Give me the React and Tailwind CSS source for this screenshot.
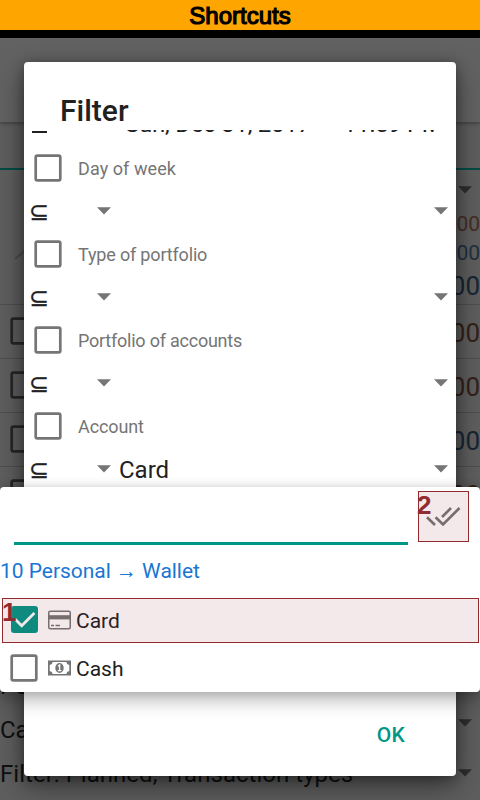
import React from "react";

function Arrow({ className = "" }) {
  return (
    <svg width="14" height="8" viewBox="0 0 14 8" className={`block shrink-0 ${className}`}>
      <path d="M0 0.2H14L7 7.6Z" fill="currentColor" />
    </svg>
  );
}

function Box({ className = "" }) {
  return (
    <svg width="28" height="28" viewBox="0 0 28 28" className={`block shrink-0 ${className}`} fill="none">
      <rect x="1.7" y="1.7" width="24.6" height="24.6" rx="1.6" stroke="currentColor" strokeWidth="2.7" />
    </svg>
  );
}

function Backdrop() {
  const rows = [
    { amount: "-500.00", color: "text-[#342018]" },
    { amount: "-300.00", color: "text-[#342018]" },
    { amount: "900.00", color: "text-[#172533]" },
    { amount: "-200.00", color: "text-[#342018]" },
  ];
  return (
    <div className="flex h-[762px] flex-col overflow-hidden bg-[#5e5e5e]">
      <div className="relative h-[84px] shrink-0 bg-[#626262] shadow-[0_1px_4px_rgba(0,0,0,0.4)]" />
      <div className="h-12 shrink-0 border-b-2 border-[#004c44]" />
      <div className="flex h-[134px] shrink-0 flex-col items-end whitespace-nowrap">
        <div className="flex h-[41px] w-full items-start justify-end pt-4 pr-2">
          <Arrow className="text-[#2e2e2e]" />
        </div>
        <div className="h-[29px] text-[21px] leading-[31px] text-[#462d22]">-1,000.00</div>
        <div className="h-[29px] text-[21px] leading-[31px] text-[#203040]">900.00</div>
        <div className="flex w-full items-start justify-between pl-[14px]">
          <svg width="24" height="12" viewBox="0 0 24 12" className="-mt-[18px]">
            <path d="M1 10L13 0" stroke="#4b4b4b" strokeWidth="2" />
          </svg>
          <div className="pt-px text-[26px] leading-[36px] text-[#172533]">900.00</div>
        </div>
      </div>
      {rows.map((r, i) => (
        <div
          key={i}
          className="flex h-[54px] shrink-0 items-center justify-between border-t border-[#4e4e4e] pl-[10px]"
        >
          <Box className="-mt-px text-[#272727]" />
          <span className={`pt-[2px] text-[26px] leading-[52px] ${r.color}`}>{r.amount}</span>
        </div>
      ))}
      <div className="h-[144px] shrink-0" />
      <div className="flex h-11 shrink-0 items-center text-[24px] text-[#101010]">Period</div>
      <div className="flex h-11 shrink-0 items-start justify-between pr-2 text-[24px] leading-[44px] text-[#101010]">
        Card
        <Arrow className="mt-[11px] text-[#2e2e2e]" />
      </div>
      <div className="flex h-12 shrink-0 items-start justify-between pr-2 text-[24px] leading-[44px] text-[#101010]">
        <span className="tracking-[0.03px]">Filter: Planned, Transaction types</span>
        <Arrow className="mt-[17px] text-[#2e2e2e]" />
      </div>
    </div>
  );
}

function FilterRow({ label, value, tracking = "" }) {
  return (
    <div className="h-[86px] shrink-0">
      <div className="flex h-[43px] items-center gap-4 pl-[10px]">
        <Box className="-mt-px text-[#757575]" />
        <span className={`text-[18px] leading-[43px] text-[#757575] ${tracking}`}>{label}</span>
      </div>
      <div className="flex h-[43px] items-center pr-2 pl-[5px] text-[#757575]">
        <span className="w-[68px] pt-px font-['DejaVu_Sans',sans-serif] text-[24px] leading-[43px] text-[#212121] [-webkit-text-stroke:0.3px_#212121]">
          ⊆
        </span>
        <Arrow className="-mt-px" />
        <span className="flex-1 pl-2 text-[24px] leading-[42px] text-[#212121]">{value}</span>
        <Arrow className="-mt-px" />
      </div>
    </div>
  );
}

function FilterDialog() {
  return (
    <div className="absolute top-[62px] left-[24px] flex h-[714px] w-[432px] flex-col rounded-[4px] bg-white shadow-[0_10px_28px_rgba(0,0,0,0.45),0_2px_12px_rgba(0,0,0,0.3)]">
      <div className="h-[68px] shrink-0 pt-[29px] pl-9 text-[30px] leading-[40px] font-medium text-[#212121]">Filter</div>
      <div className="flex h-[584px] shrink-0 flex-col overflow-hidden">
        <div className="-mt-[20px] flex h-[37px] shrink-0 items-start text-[24px] leading-[28px] whitespace-nowrap text-[#212121]">
          <span className="ml-2 flex h-[23px] w-[15px] shrink-0 border-b-2 border-[#212121]" />
          <span className="ml-[78px] w-[218px] shrink-0 tracking-[-0.25px]">Sun, Dec 31, 2017</span>
          <span className="w-[91px] shrink-0 overflow-hidden tracking-[-0.3px]">11:59 PM</span>
        </div>
        <FilterRow label="Day of week" tracking="tracking-[0.08px]" />
        <FilterRow label="Type of portfolio" tracking="tracking-[-0.17px]" />
        <FilterRow label="Portfolio of accounts" tracking="tracking-[-0.23px]" />
        <FilterRow label="Account" value="Card" tracking="tracking-[-0.1px]" />
      </div>
      <div className="flex h-[62px] items-start justify-end pt-[5px] pr-[51px] text-[21px] leading-[32px] font-medium tracking-[0.2px] text-[#009688]">
        OK
      </div>
    </div>
  );
}

function CardIcon() {
  return (
    <svg width="23" height="20" viewBox="0 0 23 20" className="shrink-0" fill="none">
      <rect x="0.75" y="1.25" width="21.5" height="17.5" rx="1.5" stroke="#757575" strokeWidth="1.5" />
      <path d="M1 5.2H22V9.4H1Z" fill="#757575" />
      <path d="M3 15.5H6M7.5 15.5H12" stroke="#757575" strokeWidth="1.3" />
    </svg>
  );
}

function CashIcon() {
  return (
    <svg width="23" height="16" viewBox="0 0 23 16" className="shrink-0" fill="none">
      <path
        fillRule="evenodd"
        d="M0 0.5H23V15.5H0ZM4.7 2Q4.4 4.7 1.7 5V11Q4.4 11.3 4.7 14H18.3Q18.6 11.3 21.3 11V5Q18.6 4.7 18.3 2Z"
        fill="#757575"
      />
      <ellipse cx="11.5" cy="8" rx="4.2" ry="5" fill="#757575" />
      <path d="M10 6.2L11.6 5V10.5M9.8 10.7H13.3" stroke="white" strokeWidth="1.3" />
    </svg>
  );
}

function AccountPopup() {
  return (
    <div className="absolute top-[487px] left-0 flex h-[205px] w-[480px] flex-col rounded-[4px] bg-white shadow-[0_10px_18px_rgba(0,0,0,0.22),0_1px_12px_rgba(0,0,0,0.2)]">
      <div className="flex h-[58px] shrink-0">
        <div className="ml-[14px] w-[394px] border-b-[3px] border-[#009688]" />
        <svg width="36" height="24" viewBox="0 0 36 24" className="mt-[17px] ml-[17px]" fill="none">
          <path d="M2 13.3L10 21M10.6 13.3L18 20.5L34.5 4M17 13L26 4" stroke="#757575" strokeWidth="2.6" />
        </svg>
      </div>
      <div className="h-[51px] shrink-0 pt-px text-[21px] leading-[51px] tracking-[-0.03px] whitespace-nowrap text-[#1976d2]">
        10 Personal → Wallet
      </div>
      <div className="flex h-12 shrink-0 items-center pl-[11px]">
        <div className="-mt-px flex h-[27px] w-[27px] shrink-0 items-center justify-center rounded-[3px] bg-[#009688]">
          <svg width="27" height="27" viewBox="0 0 27 27" fill="none">
            <path d="M4.2 13.2L10.7 19.8L23.4 7" stroke="white" strokeWidth="2.7" />
          </svg>
        </div>
        <div className="ml-[10px]">
          <CardIcon />
        </div>
        <span className="ml-[5px] pt-[2px] text-[21px] leading-[46px] text-[#212121]">Card</span>
      </div>
      <div className="flex h-12 shrink-0 items-center pl-[10px]">
        <Box className="text-[#757575]" />
        <div className="ml-[10px]">
          <CashIcon />
        </div>
        <span className="ml-[5px] pt-[2px] text-[21px] leading-[46px] text-[#212121]">Cash</span>
      </div>
    </div>
  );
}

function Marker({ n, className, labelClass }) {
  return (
    <div className={`absolute border border-[#932b2e] bg-[#932b2e]/10 ${className}`}>
      <span
        className={`absolute font-['Liberation_Sans',sans-serif] text-[26px] leading-[26px] font-bold text-[#932b2e] ${labelClass}`}
      >
        {n}
      </span>
    </div>
  );
}

export default function App() {
  return (
    <div className="relative h-[800px] w-[480px] overflow-hidden bg-black font-[Roboto,sans-serif]">
      <div className="h-[38px] border-b-8 border-black bg-[#ffa500] text-center font-['Liberation_Sans',sans-serif] text-[24px] leading-[31px] text-black [-webkit-text-stroke:1.2px_black]">
        Shortcuts
      </div>
      <Backdrop />
      <FilterDialog />
      <AccountPopup />
      <Marker n="1" className="top-[598px] left-[2px] h-[45px] w-[477px]" labelClass="top-0 -left-px" />
      <Marker n="2" className="top-[491px] left-[418px] h-[51px] w-[51px]" labelClass="top-0 -left-[2px]" />
    </div>
  );
}
